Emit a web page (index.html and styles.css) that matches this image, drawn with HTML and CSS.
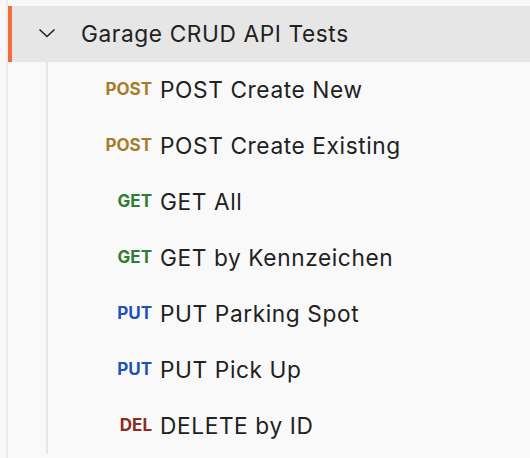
FILE: index.html
```html
<!DOCTYPE html>
<html>
<head>
<meta charset="utf-8">
<link rel="stylesheet" href="styles.css">
</head>
<body>
<div class="tree">
  <div class="folder">
    <svg class="chevron" width="18" height="10" viewBox="0 0 18 10"><path d="M1.5 1.5 L9 8.5 L16.5 1.5" fill="none" stroke="#212121" stroke-width="1.6"/></svg>
    <span class="folder-name">Garage CRUD API Tests</span>
  </div>
  <div class="children">
    <div class="item"><span class="method post">POST</span><span class="name">POST Create New</span></div>
    <div class="item"><span class="method post">POST</span><span class="name">POST Create Existing</span></div>
    <div class="item"><span class="method get">GET</span><span class="name">GET All</span></div>
    <div class="item"><span class="method get">GET</span><span class="name">GET by Kennzeichen</span></div>
    <div class="item"><span class="method put">PUT</span><span class="name">PUT Parking Spot</span></div>
    <div class="item"><span class="method put">PUT</span><span class="name">PUT Pick Up</span></div>
    <div class="item"><span class="method del">DEL</span><span class="name">DELETE by ID</span></div>
  </div>
</div>
</body>
</html>
```
FILE: styles.css
```css
html, body {
  margin: 0;
  padding: 0;
  background: #f9f9f9;
  height: 100%;
  overflow: hidden;
}
body {
  font-family: Inter, "Noto Sans", sans-serif;
  color: #212121;
}
.tree {
  margin-left: 6px;
  border-left: 2px solid #ececec;
  min-height: 100%;
  padding-top: 6px;
  box-sizing: border-box;
}
.folder {
  height: 56px;
  background: #e6e6e6;
  border-left: 4px solid #f26b3a;
  display: flex;
  align-items: center;
  box-sizing: border-box;
  padding-bottom: 2px;
}
.chevron {
  margin-left: 26px;
  flex: none;
}
.folder-name {
  margin-left: 25px;
  font-size: 22.7px;
  letter-spacing: 0.6px;
}
.children {
  margin-left: 38px;
  border-left: 2px solid #e6e6e6;
}
.item {
  height: 56px;
  display: flex;
  align-items: center;
  box-sizing: border-box;
  padding-bottom: 2px;
}
.method {
  width: 104px;
  flex: none;
  text-align: right;
  font-size: 17px;
  font-weight: 700;
  margin-right: 8px;
}
.name {
  font-size: 22.7px;
  letter-spacing: 0.6px;
}
.post { color: #a57c2b; }
.get { color: #2f7d33; }
.put { color: #1f51b8; }
.del { color: #8e2a21; }
```
